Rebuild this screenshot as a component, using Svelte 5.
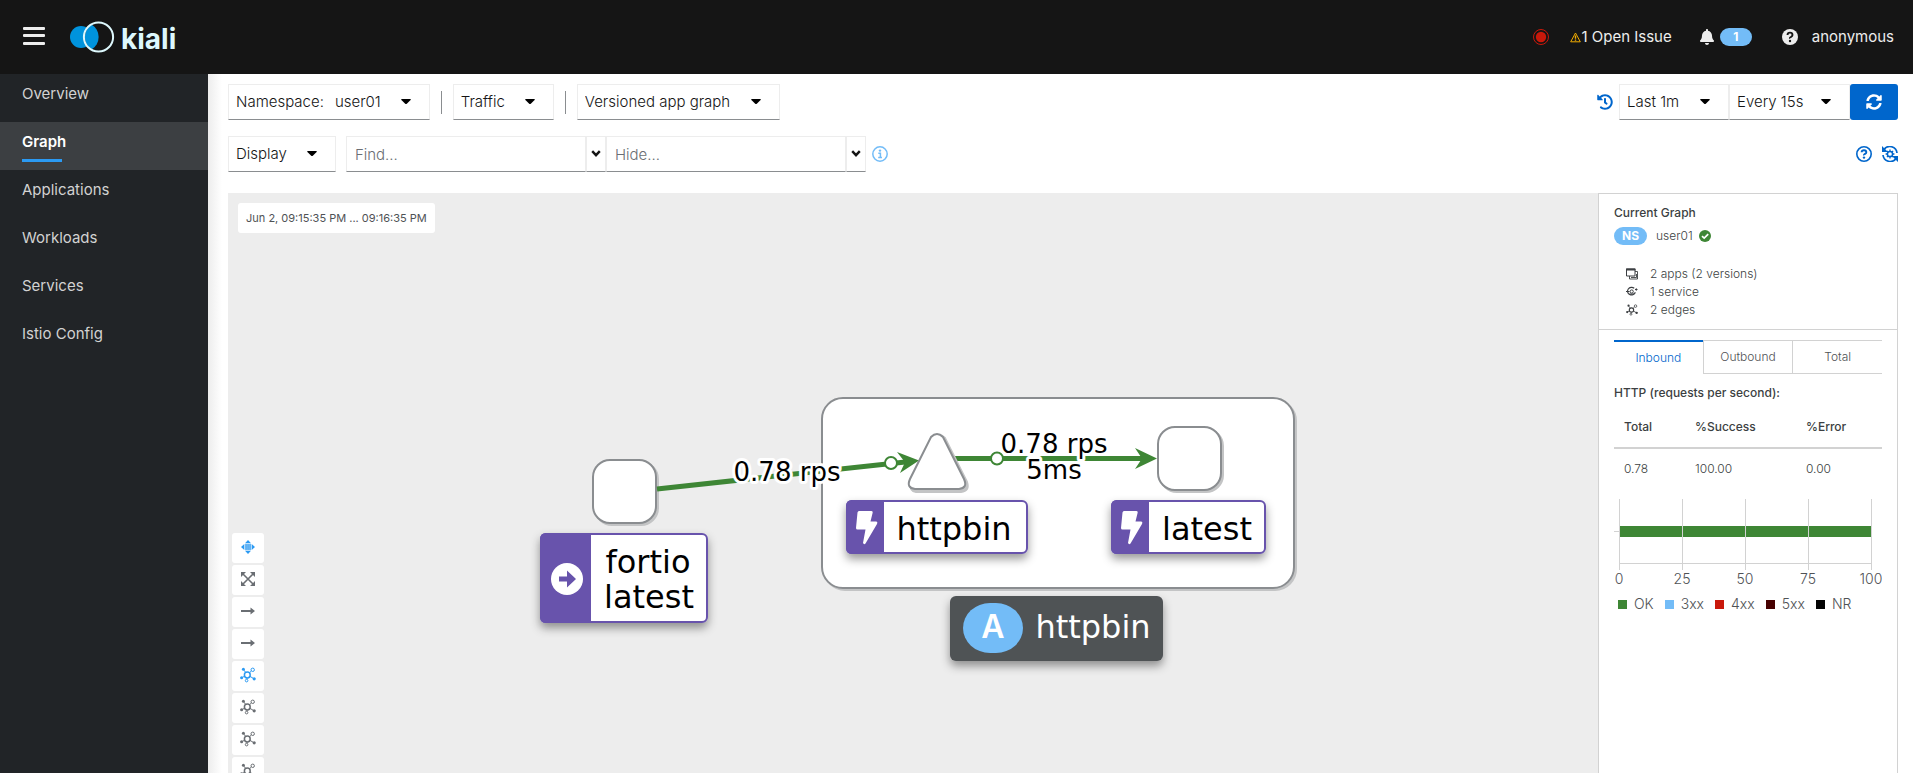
<script>
  const nav = ['Overview', 'Graph', 'Applications', 'Workloads', 'Services', 'Istio Config'];
  const tools = ['drag', 'fit', 'arrow', 'arrow', 'topo', 'topo', 'topo', 'topo'];
  const toolNames = ['Drag', 'Fit to view', 'Hide idle edges', 'Hide idle nodes', 'Layout default', 'Layout 1', 'Layout 2', 'Layout 3'];
  const activeTools = [0, 4];
  const tabs = ['Inbound', 'Outbound', 'Total'];
  const legend = [
    ['OK', '#3e8635'],
    ['3xx', '#73bcf7'],
    ['4xx', '#c9190b'],
    ['5xx', '#470000'],
    ['NR', '#030303']
  ];
  const ticks = [0, 25, 50, 75, 100];
  let current = $state('Graph');
  let tab = $state('Inbound');
  let find = $state('');
  let hide = $state('');
</script>

{#snippet caret()}
  <svg class="caret" width="10" height="6" viewBox="0 0 10 6" aria-hidden="true"><path d="M.8 0h8.4q1 .2.4 1L5.8 4.7q-.8.7-1.6 0L.4 1Q-.2.2.8 0z" /></svg>
{/snippet}

{#snippet chevron()}
  <svg width="10" height="8" viewBox="0 0 10 8" aria-hidden="true"><path d="M1.2 1.2 5 5.2l3.800-4" fill="none" stroke="#151515" stroke-width="2.4" /></svg>
{/snippet}

{#snippet topo(size)}
  <svg width={size} height={size} viewBox="0 0 16 16" fill="none" stroke="currentColor" stroke-width="1" aria-hidden="true">
    <circle cx="7.3" cy="8" r="2.9" stroke-width="1.5" />
    <circle cx="12.7" cy="2.8" r="1.7" />
    <circle cx="6.6" cy="13.6" r="1.3" />
    <path d="M9.4 5.8 11.4 4M4 3.2 5.6 5.4M2.2 10.4l2.2-1M10 9.4l3.4 2M7 11v1.2" />
    <circle cx="3.4" cy="2.2" r="1.5" fill="currentColor" stroke="none" />
    <circle cx="1.6" cy="10.8" r="1.5" fill="currentColor" stroke="none" />
    <circle cx="14.2" cy="11.8" r="1.6" fill="currentColor" stroke="none" />
  </svg>
{/snippet}

{#snippet bolt()}
  <path d="M3 0h12.5q1.500 0 1.200 1.500L14.500 10.500H20q2 .4 1 2.500L9.500 32.500Q8 34 7 32L9.500 18.500H1.500Q0 18.500 0 17L1.500 1.500Q1.800 0 3 0z" fill="#fff" />
{/snippet}

<div class="page">
  <header class="masthead">
    <button class="plain burger" aria-label="Toggle navigation">
      <svg width="22" height="20" viewBox="0 0 22 20" fill="#ededed"><rect width="22" height="3" rx="1" /><rect y="7" width="22" height="3" rx="1" /><rect y="15" width="22" height="3" rx="1" /></svg>
    </button>
    <a class="brand" href="#home" aria-label="kiali">
      <svg width="46" height="32" viewBox="0 0 46 32">
        <circle cx="11" cy="16" r="11" fill="#0093dd" />
        <circle cx="28.500" cy="16" r="15" fill="#151515" />
        <path d="M21.500 3.500A14.500 14.500 0 0 1 21.500 28.500A15 15 0 0 1 21.500 3.500z" fill="#0093dd" />
        <circle cx="28.500" cy="16" r="14.600" fill="none" stroke="#ddf8fd" stroke-width="2" />
      </svg>
      <span>kiali</span>
    </a>
    <div class="status">
      <svg class="record" width="18" height="18" viewBox="0 0 18 18"><circle cx="9" cy="9" r="7.500" fill="none" stroke="#c9190b" /><circle cx="9" cy="9" r="5.200" fill="#c9190b" /></svg>
      <a class="issue" href="#issues">
        <svg width="11" height="11" viewBox="0 0 11 11"><path d="M5.500 1 10.300 9.800H.7z" fill="none" stroke="#f0ab00" /><path d="M5.500 3.500v3.200M5.500 7.500v1.300" stroke="#f0ab00" stroke-width="1.400" /></svg>1 Open Issue
      </a>
      <button class="plain notify" aria-label="Notifications">
        <svg width="14" height="16" viewBox="0 0 448 512" fill="#ededed"><path d="M224 512c35.320 0 63.970-28.650 63.970-64H160.030c0 35.350 28.650 64 63.970 64zm215.390-149.710c-19.320-20.760-55.470-51.990-55.470-154.290 0-77.700-54.480-139.900-127.940-155.160V32c0-17.670-14.320-32-31.980-32s-31.980 14.330-31.980 32v20.840C118.560 68.100 64.080 130.300 64.080 208c0 102.300-36.150 133.530-55.470 154.290-6 6.450-8.660 14.160-8.610 21.710.11 16.400 12.980 32 32.100 32h383.800c19.120 0 32-15.600 32.100-32 .05-7.550-2.610-15.270-8.610-21.710z" /></svg>
        <span>1</span>
      </button>
      <button class="plain help" aria-label="Help">
        <svg width="16" height="16" viewBox="0 0 16 16"><circle cx="8" cy="8" r="8" fill="#ededed" /><path d="M5.500 6Q5.600 3.600 8 3.600T10.500 6Q10.500 7.200 9 8T8 9.600" fill="none" stroke="#151515" stroke-width="1.900" /><circle cx="8" cy="12" r="1.200" fill="#151515" /></svg>
      </button>
      <button class="plain user">anonymous</button>
    </div>
  </header>

  <div class="body">
    <nav class="sidebar" aria-label="Main">
      {#each nav as item}
        <a href="#{item}" class:current={current === item} onclick={() => (current = item)}>{item}</a>
      {/each}
    </nav>

    <main>
      <div class="toolbar">
        <button class="menu"><span>Namespace:</span><span class="ns">user01</span>{@render caret()}</button>
        <i class="divider"></i>
        <button class="menu" aria-haspopup="true">Traffic{@render caret()}</button>
        <i class="divider"></i>
        <label class="picker graphtype">
          <select aria-label="Graph type"><option>Versioned app graph</option><option>App graph</option><option>Workload graph</option></select>
          {@render caret()}
        </label>
        <div class="group end">
          <button class="plain history" aria-label="Replay">
            <svg width="16" height="16" viewBox="0 0 512 512" fill="#06c"><path d="M504 255.531c.253 136.640-111.180 248.372-247.820 248.468-59.015.042-113.223-20.530-155.822-54.911-11.077-8.940-11.905-25.541-1.839-35.607l11.267-11.267c8.609-8.609 22.353-9.551 31.891-1.984C173.062 425.135 212.781 440 256 440c101.705 0 184-82.311 184-184 0-101.705-82.311-184-184-184-48.814 0-93.149 18.969-126.068 49.932l50.754 50.754c10.080 10.080 2.941 27.314-11.313 27.314H24c-8.837 0-16-7.163-16-16V38.627c0-14.254 17.234-21.393 27.314-11.314l49.372 49.372C129.209 34.136 189.552 8 256 8c136.810 0 247.747 110.780 248 247.531zm-180.912 78.784l9.823-12.630c8.138-10.463 6.253-25.542-4.210-33.679L288 256.349V152c0-13.255-10.745-24-24-24h-16c-13.255 0-24 10.745-24 24v135.651l65.409 50.874c10.463 8.137 25.541 6.253 33.679-4.210z" /></svg>
          </button>
          <label class="picker duration"><select aria-label="Duration"><option>Last 1m</option><option>Last 5m</option></select>{@render caret()}</label>
          <label class="picker interval"><select aria-label="Refresh interval"><option>Every 15s</option><option>Every 60s</option></select>{@render caret()}</label>
          <button class="refresh" aria-label="Refresh">
            <svg width="16" height="16" viewBox="0 0 512 512" fill="#fff"><path d="M370.720 133.280C339.458 104.008 298.888 87.962 255.848 88c-77.458.068-144.328 53.178-162.791 126.850-1.344 5.363-6.122 9.150-11.651 9.150H24.103c-7.498 0-13.194-6.807-11.807-14.176C33.933 94.924 134.813 8 256 8c66.448 0 126.791 26.136 171.315 68.685L463.030 40.970C478.149 25.851 504 36.559 504 57.941V192c0 13.255-10.745 24-24 24H345.941c-21.382 0-32.090-25.851-16.971-40.971l41.750-41.749zM32 296h134.059c21.382 0 32.090 25.851 16.971 40.971l-41.750 41.750c31.262 29.273 71.835 45.319 114.876 45.280 77.418-.07 144.315-53.144 162.787-126.849 1.344-5.363 6.122-9.150 11.651-9.150h57.304c7.498 0 13.194 6.807 11.807 14.176C478.067 417.076 377.187 504 256 504c-66.448 0-126.791-26.136-171.315-68.685L48.970 471.030C33.851 486.149 8 475.441 8 454.059V320c0-13.255 10.745-24 24-24z" /></svg>
          </button>
        </div>
      </div>

      <div class="toolbar second">
        <button class="menu" aria-haspopup="true">Display{@render caret()}</button>
        <div class="group search">
          <input type="text" placeholder="Find..." aria-label="Find" bind:value={find} />
          <button class="chev" aria-label="Find presets">{@render chevron()}</button>
          <input type="text" placeholder="Hide..." aria-label="Hide" bind:value={hide} />
          <button class="chev" aria-label="Hide presets">{@render chevron()}</button>
        </div>
        <button class="plain info" aria-label="Find and hide help">
          <svg width="16" height="16" viewBox="0 0 16 16"><circle cx="8" cy="8" r="7.200" fill="none" stroke="#73bcf7" stroke-width="1.500" /><circle cx="8" cy="4.600" r="1.200" fill="#73bcf7" /><path d="M6.300 7.200H8.400V11M6.200 11.400h3.800" fill="none" stroke="#73bcf7" stroke-width="1.500" /></svg>
        </button>
        <div class="group end tour">
          <button class="plain" aria-label="Graph tour">
            <svg width="16" height="16" viewBox="0 0 16 16"><circle cx="8" cy="8" r="7.200" fill="none" stroke="#06c" stroke-width="1.600" /><path d="M5.600 6.200Q5.700 4.200 8 4.200T10.300 6.200Q10.300 7.200 9 7.900T8 9.300" fill="none" stroke="#06c" stroke-width="1.900" /><circle cx="8" cy="11.600" r="1.200" fill="#06c" /></svg>
          </button>
          <button class="plain" aria-label="Reset graph settings">
            <svg width="16" height="16" viewBox="0 0 16 16" fill="none" stroke="#06c"><path d="M1.800 3.800A7.200 7.200 0 0 1 15 7M14.200 12.200A7.200 7.200 0 0 1 1 9" stroke-width="1.700" /><path d="M0 0v6h6zM16 16v-6h-6z" fill="#06c" stroke="none" /><circle cx="8" cy="8" r="2.600" stroke-width="1.500" /><path d="M8 3.600v1.600M8 10.800v1.600M3.600 8h1.600M10.800 8h1.600M4.900 4.900 6 6M10 10l1.100 1.100M4.900 11.100 6 10M10 6l1.100-1.100" stroke-width="1.300" /></svg>
          </button>
        </div>
      </div>

      <div class="workspace">
        <section class="canvas" aria-label="Graph">
          <svg class="graph" width="100%" height="100%">
            <defs>
              <filter id="lift" x="-20%" y="-20%" width="140%" height="160%"><feDropShadow dx="0" dy="5" stdDeviation="5" flood-opacity="0.4" /></filter>
            </defs>
            <g fill="#c3c4c5" stroke="#c3c4c5" stroke-width="2">
              <rect x="596" y="207" width="472" height="190" rx="21" />
              <rect x="367" y="269" width="63" height="63" rx="17" />
            </g>
            <g fill="#fff" stroke="#8a8d90" stroke-width="2">
              <rect x="594" y="205" width="472" height="190" rx="21" />
              <rect x="365" y="267" width="63" height="63" rx="17" />
            </g>
            <g stroke="#3e8635" fill="none">
              <path d="M429 296 682 268.500M722 265.500H918" stroke-width="5" />
              <path d="M691 267.500 669 259l8 10.300-5 10.700zM929 265.500l-22-10.500 7 10.500-7 10.500z" fill="#3e8635" stroke="none" />
              <circle cx="663" cy="270" r="6" fill="#fff" stroke-width="2" />
              <circle cx="769" cy="265.500" r="6" fill="#fff" stroke-width="2" />
            </g>
            <g stroke-width="2">
              <path d="M705 245Q711 239 717 245L739 289Q742 298 733 299H688Q681 298 683 290z" fill="#c3c4c5" stroke="#c3c4c5" />
              <path d="M703 244Q709 238 715 244L736 286Q740 295 731 296H687Q678 295 682 286z" fill="#fff" stroke="#8a8d90" />
              <rect x="932" y="236" width="63" height="63" rx="17" fill="#c3c4c5" stroke="#c3c4c5" />
              <rect x="930" y="234" width="63" height="63" rx="17" fill="#fff" stroke="#8a8d90" />
            </g>
            <g class="edge" text-anchor="middle">
              <text x="559" y="288">0.78 rps</text>
              <text x="826" y="260">0.78 rps</text>
              <text x="826" y="286">5ms</text>
            </g>

            <g filter="url(#lift)">
              <rect x="313" y="341" width="166" height="88" rx="5" fill="#fff" stroke="#6753ac" stroke-width="2" />
              <path d="M363 340H318q-6 0-6 6v78q0 6 6 6h45z" fill="#6753ac" />
            </g>
            <circle cx="339" cy="386" r="16" fill="#fff" />
            <path d="M331 383.500h8v-6l9 8.500-9 8.500v-6h-8z" fill="#6753ac" />
            <g filter="url(#lift)">
              <rect x="619" y="308" width="180" height="52" rx="5" fill="#fff" stroke="#6753ac" stroke-width="2" />
              <path d="M656 307H624q-6 0-6 6v42q0 6 6 6h32z" fill="#6753ac" />
            </g>
            <g transform="translate(628 318)">{@render bolt()}</g>
            <g filter="url(#lift)">
              <rect x="884" y="308" width="153" height="52" rx="5" fill="#fff" stroke="#6753ac" stroke-width="2" />
              <path d="M921 307H889q-6 0-6 6v42q0 6 6 6h32z" fill="#6753ac" />
            </g>
            <g transform="translate(893 318)">{@render bolt()}</g>
            <rect x="722" y="403" width="213" height="65" rx="6" fill="#4f5255" filter="url(#lift)" />
            <rect x="735" y="410" width="60" height="50" rx="27" fill="#73bcf7" />
            <text class="kind" x="765" y="445" text-anchor="middle">A</text>
            <g class="name" text-anchor="middle">
              <text x="420" y="380">fortio</text>
              <text x="421" y="415">latest</text>
              <text x="726" y="347">httpbin</text>
              <text x="979" y="347">latest</text>
              <text class="light" x="865" y="445">httpbin</text>
            </g>
          </svg>
          <div class="period">Jun 2, 09:15:35 PM ... 09:16:35 PM</div>
          <div class="tools">
            {#each tools as tool, i}
              <button class:on={activeTools.includes(i)} aria-label={toolNames[i]}>
                {#if tool === 'drag'}
                  <svg width="14" height="14" viewBox="0 0 14 14" fill="currentColor"><path d="M7 0 10 3.300H4zM7 14l3-3.300H4zM0 7l3.300-3v6zM14 7l-3.300-3v6z" /><path d="M4.300 4.300h1.500v1.500H4.300zM6.300 4.300h1.500v1.500H6.300zM8.300 4.300h1.500v1.500H8.300zM4.300 6.300h1.500v1.500H4.300zM6.300 6.300h1.500v1.500H6.300zM8.300 6.300h1.500v1.500H8.300zM4.300 8.300h1.500v1.500H4.300zM6.300 8.300h1.500v1.500H6.300zM8.300 8.300h1.500v1.500H8.300z" stroke="currentColor" stroke-width=".3" /></svg>
                {:else if tool === 'fit'}
                  <svg width="14" height="14" viewBox="0 0 14 14" fill="currentColor"><path d="M0 0h5L0 5zM14 0v5L9 0zM0 14V9l5 5zM14 14H9l5-5z" /><path d="M2 2 12 12M12 2 2 12" stroke="currentColor" stroke-width="1.600" /></svg>
                {:else if tool === 'arrow'}
                  <svg width="14" height="8" viewBox="0 0 14 8" fill="currentColor"><path d="M0 3h9.500V.5L14 4 9.500 7.500V5H0z" /></svg>
                {:else}
                  {@render topo(16)}
                {/if}
              </button>
            {/each}
          </div>
        </section>

        <aside class="panel">
          <div class="summary">
            <strong>Current Graph</strong>
            <div class="nsrow">
              <span class="badge">NS</span><span>user01</span>
              <svg width="12" height="12" viewBox="0 0 12 12"><circle cx="6" cy="6" r="6" fill="#3e8635" /><path d="M3 6.200 5.200 8.200 9.200 4.200" fill="none" stroke="#fff" stroke-width="1.700" /></svg>
            </div>
            <ul>
              <li>
                <svg width="12" height="12" viewBox="0 0 12 12" fill="none" stroke="currentColor"><path d="M.5 1h8.500v7H.5z" /><path d="M0 1.500h9.500" stroke-width="2" /><path d="M9 3.500h2.500v7.500H3.500V8M10.500 6v3.500H5" stroke-width=".9" /></svg>
                2 apps (2 versions)
              </li>
              <li>
                <svg width="12" height="12" viewBox="0 0 12 12" fill="none" stroke="currentColor"><path d="M8.200 2.300A4 3.800 0 1 0 9.300 6.500" stroke-width="1.200" /><path d="M0 5.500h3.500M3.500 8h4l1.500-1.500M9 3.500h2.500M10.300 2.300v2.400" /><circle cx="5.700" cy="5.500" r="1.600" /></svg>
                1 service
              </li>
              <li>{@render topo(12)} 2 edges</li>
            </ul>
          </div>
          <div class="traffic">
            <div class="tabs" role="tablist">
              {#each tabs as t}
                <button role="tab" aria-selected={tab === t} class:selected={tab === t} onclick={() => (tab = t)}>{t}</button>
              {/each}
            </div>
            <strong>HTTP (requests per second):</strong>
            <table>
              <thead><tr><th>Total</th><th>%Success</th><th>%Error</th></tr></thead>
              <tbody><tr><td>0.78</td><td>100.00</td><td>0.00</td></tr></tbody>
            </table>
            <svg class="chart" width="268" height="90" aria-label="Response codes in percent">
              <path d="M0 33.500h5" stroke="#d2d2d2" />
              <rect x="5" y="28" width="253" height="11" fill="#3e8635" />
              <path d="M5 65.500h253" stroke="#d2d2d2" />
              {#each ticks as t, i}
                <path d="M{5.5 + i * 63} 1v71" stroke="#d2d2d2" />
                <text x={5 + i * 63} y="86" text-anchor="middle">{t}</text>
              {/each}
            </svg>
            <ul class="legend">
              {#each legend as [label, color]}
                <li><i style="background: {color}"></i>{label}</li>
              {/each}
            </ul>
          </div>
        </aside>
      </div>
    </main>
  </div>
</div>

<style>
  :global(body) { overflow: hidden; }
  .page {
    --line: #ededed;
    display: flex;
    flex-direction: column;
    height: 100vh;
    font: 300 15px/24px Inter, sans-serif;
    color: #151515;
    background: #fff;
  }
  button, input, select { font: inherit; color: inherit; margin: 0; box-sizing: border-box; border-radius: 0; }
  svg { display: block; flex: none; }
  ul { list-style: none; margin: 0; padding: 0; }
  strong { display: block; font-weight: 500; }
  .plain { display: flex; align-items: center; padding: 0; border: 0; background: none; cursor: pointer; }

  .masthead { display: flex; align-items: center; flex: none; height: 74px; padding: 0 19px 0 23px; background: #151515; color: #ededed; box-sizing: border-box; font-weight: 400; }
  .burger { margin-right: 25px; }
  .brand { display: flex; align-items: center; gap: 5px; text-decoration: none; color: #ddf8fd; font-weight: 700; font-size: 28px; line-height: 32px; }
  .brand span { padding-top: 4px; }
  .status { display: flex; align-items: center; margin-left: auto; }
  .record { margin-right: 20px; }
  .issue { display: flex; align-items: center; color: inherit; text-decoration: none; margin-right: 28px; }
  .notify { gap: 6px; margin-right: 30px; }
  .notify span { width: 32px; border-radius: 9px; background: #73bcf7; color: #fff; font-size: 12px; line-height: 18px; font-weight: 700; }
  .help { margin-right: 14px; }

  .body { display: flex; flex: 1; min-height: 0; }
  .sidebar { flex: none; width: 208px; background: #212427; }
  .sidebar a { position: relative; display: block; padding: 8px 22px 16px; color: #d2d2d2; text-decoration: none; font-weight: 400; }
  .sidebar a.current { background: #3c3f42; color: #fff; font-weight: 600; }
  .sidebar a.current::after { content: ''; position: absolute; left: 22px; bottom: 8px; width: 40px; height: 3px; background: #2b9af3; }

  main { flex: 1; min-width: 0; display: flex; flex-direction: column; padding: 10px 15px 0 20px; background: linear-gradient(90deg, #ededed, #fff 14px); }
  .toolbar { display: flex; align-items: center; flex: none; height: 36px; }
  .second { margin: 16px 0 21px; }
  .menu, .picker, .search input, .chev { height: 36px; border: 1px solid var(--line); border-bottom-color: #8a8d90; background: #fff; box-sizing: border-box; }
  .menu { display: flex; align-items: center; padding: 0 18px 0 7px; cursor: pointer; }
  .menu .caret { margin-left: 20px; }
  .ns { margin-left: 11px; }
  .divider { width: 1px; height: 23px; margin: 0 11px; background: #8a8d90; }
  .picker { display: flex; align-items: center; position: relative; }
  .picker select { appearance: none; width: 100%; height: 34px; padding: 0 7px; border: 0; background: none; }
  .picker .caret { position: absolute; right: 18px; pointer-events: none; }
  .graphtype { width: 203px; }
  .duration { width: 110px; }
  .interval { width: 121px; }
  .group { display: flex; align-items: center; }
  .end { margin-left: auto; }
  .history { margin-right: 6px; }
  .refresh { display: flex; align-items: center; justify-content: center; width: 48px; height: 36px; border: 0; border-radius: 3px; background: #06c; padding: 0; cursor: pointer; }
  .search { margin-left: 10px; }
  .search input { width: 240px; padding: 0 8px; outline: 0; }
  .search input::placeholder { color: #6a6e73; opacity: 1; }
  .chev { display: flex; align-items: center; justify-content: center; width: 20px; padding: 0; }
  .info { margin-left: 6px; }
  .tour { gap: 10px; }

  .workspace { display: flex; flex: 1; min-height: 0; }
  .canvas { position: relative; flex: 1; min-width: 0; overflow: hidden; background: #ededed; }
  .graph { position: absolute; inset: 0; }
  .edge { font: 26px 'DejaVu Sans', Verdana, sans-serif; paint-order: stroke; stroke: #fff; stroke-width: 6px; stroke-linejoin: round; }
  .name { font: 32px 'DejaVu Sans', Verdana, sans-serif; }
  .light { fill: #fff; }
  .kind { font: 600 32px Inter, sans-serif; fill: #fff; }
  .period { position: absolute; left: 10px; top: 10px; padding: 3px 8px; border-radius: 3px; background: #fff; color: #4f5255; font-size: 11px; line-height: 24px; font-weight: 400; }
  .tools { position: absolute; left: 4px; top: 340px; display: flex; flex-direction: column; gap: 2px; }
  .tools button { display: flex; align-items: center; justify-content: center; width: 32px; height: 30px; padding: 0 0 2px; border: 0; border-radius: 3px; background: #fff; color: #6a6e73; cursor: pointer; }
  .tools button.on { color: #2b9af3; }

  .panel { flex: none; width: 300px; box-sizing: border-box; border: 1px solid #d2d2d2; border-bottom: 0; background: #fff; font-size: 12px; line-height: 18px; color: #3c3f42; }
  .summary { padding: 10px 15px; border-bottom: 1px solid #d2d2d2; }
  .nsrow { display: flex; align-items: center; gap: 9px; margin-top: 5px; }
  .nsrow svg { margin-left: -3px; }
  .badge { width: 33px; border-radius: 9px; background: #73bcf7; color: #fff; font-weight: 700; text-align: center; }
  .summary ul { margin: 20px 0 0 12px; }
  .summary li { display: flex; align-items: center; gap: 12px; }
  .traffic { padding: 10px 15px; }
  .tabs { display: flex; margin-bottom: 10px; }
  .tabs button { flex: 1; height: 34px; padding: 0; border: 1px solid #d2d2d2; border-right-width: 0; background: #fff; color: #4f5255; cursor: pointer; }
  .tabs button.selected { border: 0; border-top: 2px solid #06c; color: #06c; }
  table { width: 268px; margin-top: 7px; border-collapse: collapse; table-layout: fixed; }
  th, td { padding: 9px 0 9px 10px; text-align: left; font-weight: 300; }
  th { font-weight: 500; padding-bottom: 11px; }
  tr > :first-child { width: 61px; }
  tr > :nth-child(2) { width: 101px; }
  tbody { border-top: 2px solid #d2d2d2; }
  td { padding-top: 11px; }
  .chart { margin-top: 11px; font-size: 14px; fill: #4f5255; }
  .legend { display: flex; gap: 11px; padding-left: 4px; margin-top: 7px; font-size: 14px; color: #4f5255; }
  .legend li { display: flex; align-items: center; gap: 7px; }
  .legend i { width: 9px; height: 9px; }
</style>
